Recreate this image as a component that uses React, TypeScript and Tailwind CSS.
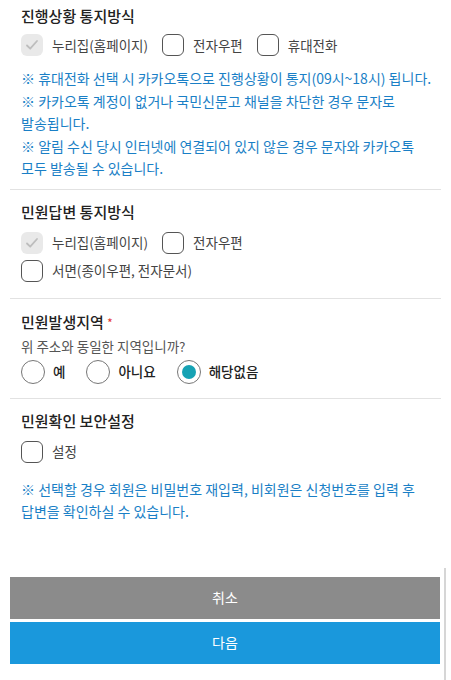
import React from "react";

const font = { fontFamily: '"Noto Sans CJK KR", "Noto Sans", sans-serif' };

const Check: React.FC<{ label: string; locked?: boolean }> = ({ label, locked }) => (
  <label className="flex items-center h-6 mr-[14px]">
    {locked ? (
      <span className="w-[22px] h-[22px] rounded-md bg-[#e9e9e9] flex items-center justify-center">
        <svg width="14" height="14" viewBox="0 0 14 14" fill="none">
          <path d="M2 7.5l3.2 3.2L12 3" stroke="#bdbdbd" strokeWidth="1.8" strokeLinecap="round" strokeLinejoin="round" />
        </svg>
      </span>
    ) : (
      <span className="w-[22px] h-[22px] rounded-md border-[1.5px] border-[#555]" />
    )}
    <span className="ml-[9px] text-[13.5px] text-[#444]">{label}</span>
  </label>
);

const Radio: React.FC<{ label: string; on?: boolean }> = ({ label, on }) => (
  <label className="flex items-center h-6 mr-[21px]">
    <span className="w-6 h-6 rounded-full border-[1.5px] border-[#777] flex items-center justify-center">
      {on && <span className="w-[14px] h-[14px] rounded-full bg-[#16a2b4]" />}
    </span>
    <span className="ml-[8px] text-[13.5px] font-medium text-[#222]">{label}</span>
  </label>
);

const Note: React.FC<{ children: React.ReactNode }> = ({ children }) => (
  <p className="text-[14px] leading-[22.5px] text-[#1a7fc6] whitespace-nowrap">{children}</p>
);

const Title: React.FC<{ children: React.ReactNode }> = ({ children }) => (
  <h3 className="text-[15px] leading-[22px] font-medium text-[#222]">{children}</h3>
);

export default function App() {
  return (
    <div className="relative w-[451px] h-[680px] bg-white overflow-hidden" style={font}>
      <div className="px-[10px]">
        <section className="px-[11px] pt-[5px] pb-[9px] border-b border-[#e2e2e2]">
          <Title>진행상황 통지방식</Title>
          <div className="flex mt-[6px]">
            <Check label="누리집(홈페이지)" locked />
            <Check label="전자우편" />
            <Check label="휴대전화" />
          </div>
          <div className="mt-[10px]">
            <Note>※ 휴대전화 선택 시 카카오톡으로 진행상황이 통지(09시~18시) 됩니다.</Note>
            <Note>
              ※ 카카오톡 계정이 없거나 국민신문고 채널을 차단한 경우 문자로
              <br />
              발송됩니다.
            </Note>
            <Note>
              ※ 알림 수신 당시 인터넷에 연결되어 있지 않은 경우 문자와 카카오톡
              <br />
              모두 발송될 수 있습니다.
            </Note>
          </div>
        </section>

        <section className="px-[11px] pt-[11px] pb-[15px] border-b border-[#e2e2e2]">
          <Title>민원답변 통지방식</Title>
          <div className="flex mt-[8px]">
            <Check label="누리집(홈페이지)" locked />
            <Check label="전자우편" />
          </div>
          <div className="flex mt-[4px]">
            <Check label="서면(종이우편, 전자문서)" />
          </div>
        </section>

        <section className="px-[11px] pt-[12px] pb-[14px] border-b border-[#e2e2e2]">
          <Title>
            민원발생지역 <span className="text-[#e53935] text-[11px] align-top">*</span>
          </Title>
          <p className="mt-[2px] text-[13.5px] leading-[22px] text-[#555]">위 주소와 동일한 지역입니까?</p>
          <div className="flex mt-[3px]">
            <Radio label="예" />
            <Radio label="아니요" />
            <Radio label="해당없음" on />
          </div>
        </section>

        <section className="px-[11px] pt-[11px]">
          <Title>민원확인 보안설정</Title>
          <div className="flex mt-[8px]">
            <Check label="설정" />
          </div>
          <div className="mt-[14px]">
            <Note>
              ※ 선택할 경우 회원은 비밀번호 재입력, 비회원은 신청번호를 입력 후
              <br />
              답변을 확인하실 수 있습니다.
            </Note>
          </div>
        </section>

        <div className="mt-[54px] w-[430px] flex flex-col gap-[3px]">
          <button className="h-[42px] bg-[#8b8b8b] text-white text-[14px]">취소</button>
          <button className="h-[42px] bg-[#1a98dc] text-white text-[14px]">다음</button>
        </div>
      </div>

      {/* scroll indicator */}
      <div className="absolute right-[5px] top-[568px] bottom-0 w-[2px] bg-[#d6d6d6]" />
    </div>
  );
}
